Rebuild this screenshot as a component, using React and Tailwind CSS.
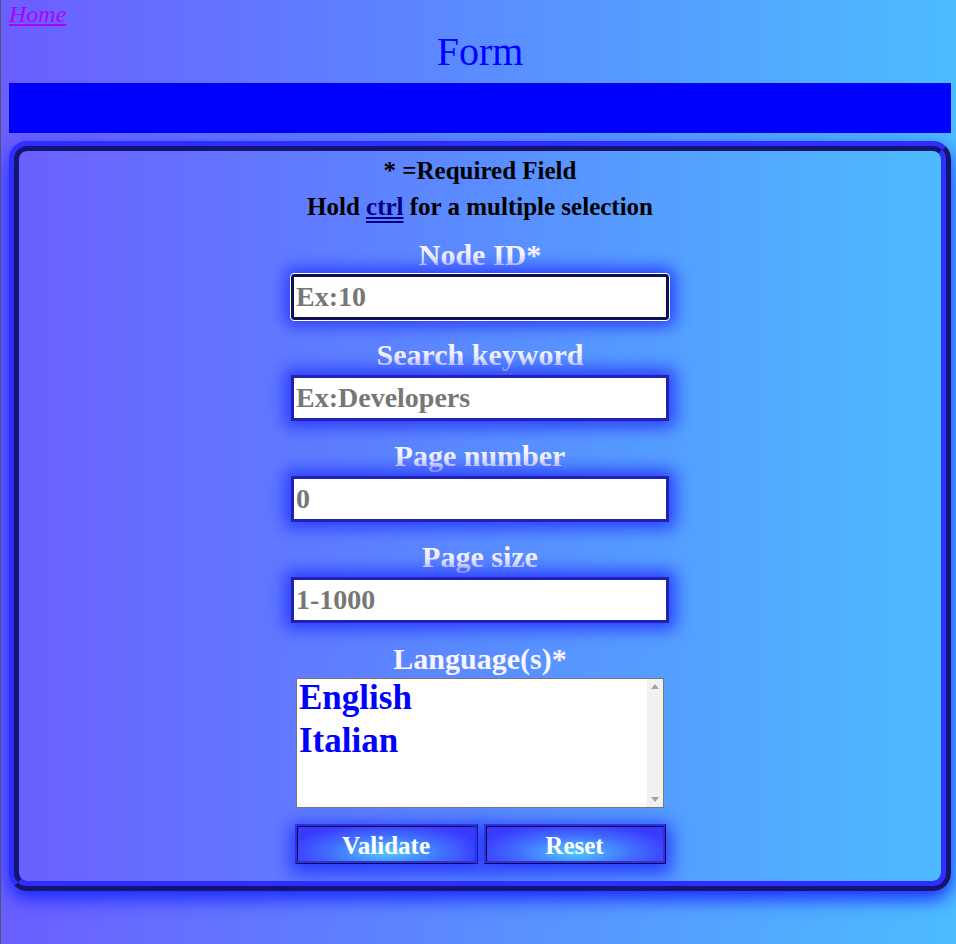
import { useState } from "react";

const serif = { fontFamily: '"Liberation Serif", "Times New Roman", serif' };

const fields = [
    { label: "Node ID*", placeholder: "Ex:10", focused: true },
    { label: "Search keyword", placeholder: "Ex:Developers" },
    { label: "Page number", placeholder: "0" },
    { label: "Page size", placeholder: "1-1000" },
];

function Field({ label, placeholder, focused }) {
    return (
        <div className="flex flex-col items-center">
            <label className="mt-[18px] text-[30px] leading-[34px] font-bold text-[#f8f5ff]">{label}</label>
            <input
                type="text"
                placeholder={placeholder}
                className={
                    focused
                        ? "mt-[2px] w-[378px] h-[46px] px-[2px] bg-white text-[28px] font-bold placeholder:text-[#777] border-[3px] border-[#10104a] rounded-[3px] outline outline-1 outline-white shadow-[0_0_16px_6px_#2a3cff]"
                        : "mt-[3px] w-[378px] h-[46px] px-[2px] bg-white text-[28px] font-bold placeholder:text-[#777] border-[3px] border-[#2121b4] shadow-[0_0_16px_6px_#2a3cff] outline-none"
                }
                style={serif}
            />
        </div>
    );
}

export default function App() {
    const [langs] = useState(["English", "Italian"]);

    return (
        <div
            className="min-h-screen border-l border-[#4f5870] bg-[linear-gradient(90deg,#6b5eff_0%,#5a8cff_50%,#4cbcff_100%)] pl-[8px] pr-[5px] pb-[20px]"
            style={serif}
        >
            <a href="#" className="block w-fit text-[24px] leading-[28px] italic underline text-[#b000ff]">
                Home
            </a>
            <h1 className="mt-[1px] text-center text-[40px] leading-[46px] text-[#0000ff]">Form</h1>
            <div className="mt-[8px] h-[50px] bg-[#0000ff]"></div>

            <form
                className="mt-[8px] border-[10px] rounded-[18px] border-[#2424c6] [border-style:ridge] shadow-[0_8px_18px_#1a2aff] pt-[6px] pb-[17px] flex flex-col items-center"
                onSubmit={(e) => e.preventDefault()}
            >
                <p className="text-[25px] leading-[28px] font-bold text-black">* =Required Field</p>
                <p className="mt-[8px] text-[25px] leading-[28px] font-bold text-black">
                    Hold <span className="text-[#000080] underline decoration-double">ctrl</span> for a multiple selection
                </p>

                <div className="-mt-[1px]"></div>
                {fields.map((f) => (
                    <Field key={f.label} {...f} />
                ))}

                <label className="mt-[19px] text-[30px] leading-[34px] font-bold text-[#f8f5ff]">Language(s)*</label>
                <div className="mt-[2px] w-[368px] h-[130px] bg-white border border-[#777] flex overflow-hidden">
                    <div className="flex-1 pl-[2px] -mt-[3px]">
                        {langs.map((l) => (
                            <div key={l} className="text-[35px] leading-[43px] font-bold text-[#0000ff]">
                                {l}
                            </div>
                        ))}
                    </div>
                    <div className="w-[16px] bg-[#f1f1f1] flex flex-col items-center justify-between py-[5px]">
                        <svg width="8" height="5" viewBox="0 0 8 5">
                            <path d="M0 5 L4 0 L8 5 Z" fill="#a3a3a3" />
                        </svg>
                        <svg width="8" height="5" viewBox="0 0 8 5">
                            <path d="M0 0 L4 5 L8 0 Z" fill="#a3a3a3" />
                        </svg>
                    </div>
                </div>

                <div className="mt-[16px] flex gap-[6px]">
                    <button
                        type="submit"
                        className="w-[183px] h-[40px] border-[3px] border-[#1e1e92] [border-style:ridge] bg-[radial-gradient(ellipse_at_50%_75%,#4fcaff_0%,#4270ff_45%,#3a3aff_80%)] text-white text-[25px] font-bold shadow-[0_5px_18px_5px_#2a3cff]"
                    >
                        Validate
                    </button>
                    <button
                        type="reset"
                        className="w-[182px] h-[40px] border-[3px] border-[#1e1e92] [border-style:ridge] bg-[radial-gradient(ellipse_at_50%_75%,#4fcaff_0%,#4270ff_45%,#3a3aff_80%)] text-white text-[25px] font-bold shadow-[0_5px_18px_5px_#2a3cff]"
                    >
                        Reset
                    </button>
                </div>
            </form>
        </div>
    );
}
